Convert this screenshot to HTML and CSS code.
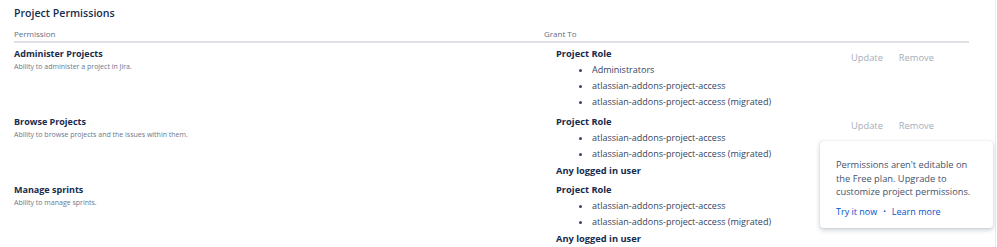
FILE: index.html
```html
<!DOCTYPE html>
<html>
<head>
<meta charset="utf-8">
<link rel="stylesheet" href="styles.css">
</head>
<body>
<div class="page">
  <h1 class="title">Project Permissions</h1>
  <div class="table">
    <div class="thead">
      <div class="th">Permission</div>
      <div class="th th-grant">Grant To</div>
      <div class="th"></div>
    </div>
    <div class="row">
      <div class="perm">
        <div class="perm-name">Administer Projects</div>
        <div class="perm-desc">Ability to administer a project in Jira.</div>
      </div>
      <div class="grant">
        <div class="group">Project Role</div>
        <ul class="items">
          <li>Administrators</li>
          <li>atlassian-addons-project-access</li>
          <li>atlassian-addons-project-access (migrated)</li>
        </ul>
      </div>
      <div class="actions"><span>Update</span><span>Remove</span></div>
    </div>
    <div class="row">
      <div class="perm">
        <div class="perm-name">Browse Projects</div>
        <div class="perm-desc">Ability to browse projects and the issues within them.</div>
      </div>
      <div class="grant">
        <div class="group">Project Role</div>
        <ul class="items">
          <li>atlassian-addons-project-access</li>
          <li>atlassian-addons-project-access (migrated)</li>
        </ul>
        <div class="group">Any logged in user</div>
      </div>
      <div class="actions"><span>Update</span><span>Remove</span></div>
    </div>
    <div class="row">
      <div class="perm">
        <div class="perm-name">Manage sprints</div>
        <div class="perm-desc">Ability to manage sprints.</div>
      </div>
      <div class="grant">
        <div class="group">Project Role</div>
        <ul class="items">
          <li>atlassian-addons-project-access</li>
          <li>atlassian-addons-project-access (migrated)</li>
        </ul>
        <div class="group">Any logged in user</div>
      </div>
      <div class="actions"></div>
    </div>
  </div>
  <div class="popup">
    <p class="popup-text">Permissions aren't editable on<br>the Free plan. Upgrade to<br>customize project permissions.</p>
    <div class="popup-links"><a>Try it now</a><span class="dot">•</span><a>Learn more</a></div>
  </div>
</div>
</body>
</html>
```
FILE: styles.css
```css
* { box-sizing: border-box; }
html, body { margin: 0; padding: 0; background: #fff; }
body {
  font-family: "Open Sans", "Noto Sans", sans-serif;
  color: #172b4d;
  overflow: hidden;
}
.page {
  position: relative;
  width: 996px;
  height: 247px;
  border-right: 1px solid #ebecf0;
  padding: 4px 28px 0 14px;
}
.title {
  margin: 0;
  font-size: 10.6px;
  font-weight: 600;
  line-height: 18px;
  color: #172b4d;
}
.table { margin-top: 6px; width: 955px; }
.thead {
  display: grid;
  grid-template-columns: 530px 1fr 130px;
  border-bottom: 2px solid #dfe1e6;
  height: 15px;
}
.th {
  font-size: 8px;
  color: #5e6c84;
  line-height: 12px;
}
.row {
  display: grid;
  grid-template-columns: 530px 1fr 130px;
  padding-top: 2px;
  height: 68px;
}
.perm-name {
  font-size: 9px;
  font-weight: 700;
  line-height: 17px;
  color: #172b4d;
}
.perm-desc {
  font-size: 7px;
  color: #6b778c;
  line-height: 10px;
}
.grant { padding-left: 12px; }
.group {
  font-size: 9.3px;
  font-weight: 700;
  line-height: 17px;
  color: #172b4d;
}
.items {
  margin: 0;
  padding: 0 0 0 36px;
  list-style: disc;
}
.items li {
  font-size: 9px;
  line-height: 16px;
  color: #344563;
}
.actions {
  display: flex;
  gap: 16px;
  padding-left: 12px;
  padding-top: 6px;
  font-size: 9.3px;
  line-height: 14px;
  color: #a5adba;
}
.popup {
  position: absolute;
  left: 820px;
  top: 141px;
  width: 173px;
  height: 87px;
  background: #fff;
  border-radius: 3px;
  box-shadow: 0 2px 5px rgba(9, 30, 66, 0.22), 0 0 1px rgba(9, 30, 66, 0.25);
  padding: 17px 8px 0 16px;
}
.popup-text {
  margin: 0;
  font-size: 9.3px;
  line-height: 13.5px;
  color: #42526e;
  white-space: nowrap;
}
.popup-links {
  margin-top: 6px;
  font-size: 9px;
  line-height: 13px;
  color: #0052cc;
  display: flex;
  align-items: center;
}
.popup-links .dot { margin: 0 6px; font-size: 7px; }
```
